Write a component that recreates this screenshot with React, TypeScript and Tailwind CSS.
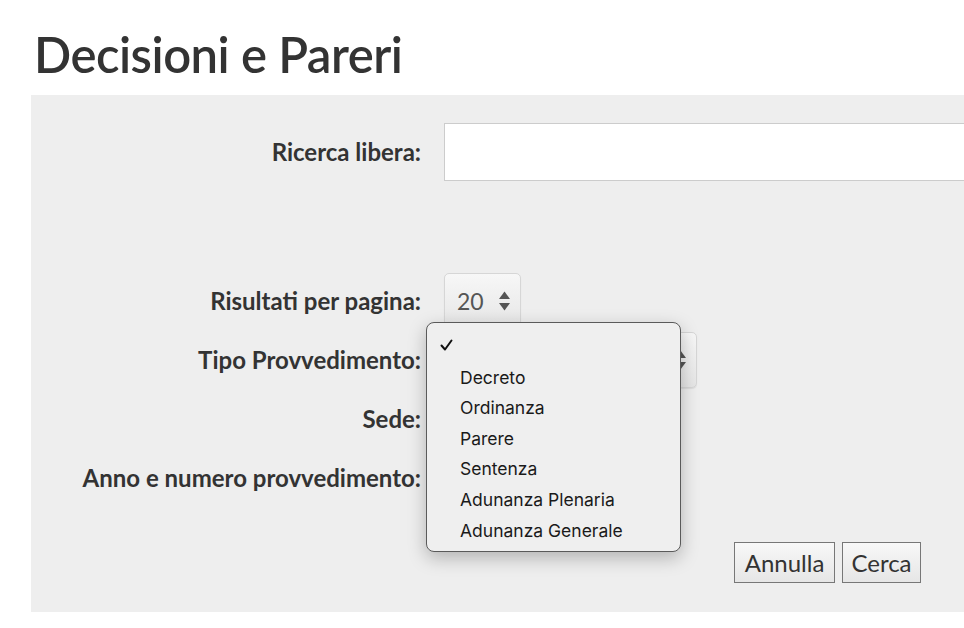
import { useState } from 'react';

const tipi = ['Decreto', 'Ordinanza', 'Parere', 'Sentenza', 'Adunanza Plenaria', 'Adunanza Generale'];

// Native-looking select box (closed state)
function FakeSelect({ value, width }: { value: string; width: string }) {
    return (
        <div
            className={`${width} h-[56px] flex items-center justify-between pl-[12px] pr-[9px] rounded-[5px] border border-[#d6d6d6] bg-gradient-to-b from-[#f7f7f7] to-[#e6e6e6] shadow-[0_1px_1px_rgba(0,0,0,0.08)]`}
        >
            <span className="text-[23px] text-[#555]">{value}</span>
            <svg width="13" height="22" viewBox="0 0 13 22" className="text-[#555]">
                <path d="M6.5 1.5 L12 9 L1 9 Z" fill="currentColor" />
                <path d="M6.5 20.5 L12 13 L1 13 Z" fill="currentColor" />
            </svg>
        </div>
    );
}

export default function App() {
    const [query, setQuery] = useState('');

    return (
        <div className="relative min-h-[628px] bg-white overflow-hidden font-['Lato',sans-serif] text-[#333]">
            <h1 className="pl-[34px] pt-[26px] text-[49px] leading-[56px] font-semibold tracking-[-0.5px]">
                Decisioni e Pareri
            </h1>

            <div className="ml-[31px] mt-[13px] w-[1000px] h-[517px] bg-[#eeeeee] pt-[28px]">
                <div className="grid grid-cols-[390px_1fr] gap-x-[23px] items-center">
                    <label className="text-right text-[24px] font-bold">Ricerca libera:</label>
                    <input
                        value={query}
                        onChange={e => setQuery(e.target.value)}
                        className="h-[58px] border border-[#cccccc] bg-white outline-none px-3 text-[20px]"
                    />
                </div>

                <div className="mt-[92px] grid grid-cols-[390px_1fr] gap-x-[23px] gap-y-[3px] items-center">
                    <label className="text-right text-[24px] font-bold">Risultati per pagina:</label>
                    <FakeSelect value="20" width="w-[77px]" />

                    <label className="text-right text-[24px] font-bold">Tipo Provvedimento:</label>
                    <FakeSelect value="" width="w-[253px]" />

                    <label className="text-right text-[24px] font-bold h-[56px] leading-[56px]">Sede:</label>
                    <div className="h-[56px]" />

                    <label className="text-right text-[24px] font-bold h-[56px] leading-[56px]">
                        Anno e numero provvedimento:
                    </label>
                    <div className="h-[56px]" />
                </div>

                <div className="mt-[36px] flex justify-end gap-[7px] pr-[110px]">
                    <button className="w-[101px] h-[41px] border border-[#777] bg-gradient-to-b from-[#f8f8f8] to-[#e6e6e6] text-[24px] leading-none text-[#333]">
                        Annulla
                    </button>
                    <button className="w-[79px] h-[41px] border border-[#777] bg-gradient-to-b from-[#f8f8f8] to-[#e6e6e6] text-[24px] leading-none text-[#333]">
                        Cerca
                    </button>
                </div>
            </div>

            {/* open dropdown menu of Tipo Provvedimento */}
            <div className="absolute left-[426px] top-[322px] w-[255px] h-[230px] rounded-[8px] border border-[#5a5a5a] bg-[#efefef] shadow-[0_6px_18px_rgba(0,0,0,0.25)] pt-[10px] font-['Inter',sans-serif] text-[17.5px] text-[#1a1a1a]">
                <div className="h-[29px] pl-[13px] flex items-start pt-[6px]">
                    <svg width="13" height="12" viewBox="0 0 13 12">
                        <path d="M1.5 6.5 L5 10.5 L11.5 1.5" fill="none" stroke="#111" strokeWidth="2" strokeLinecap="round" strokeLinejoin="round" />
                    </svg>
                </div>
                {tipi.map(t => (
                    <div key={t} className="h-[30.6px] pl-[33px] flex items-center leading-none">
                        {t}
                    </div>
                ))}
            </div>
        </div>
    );
}
